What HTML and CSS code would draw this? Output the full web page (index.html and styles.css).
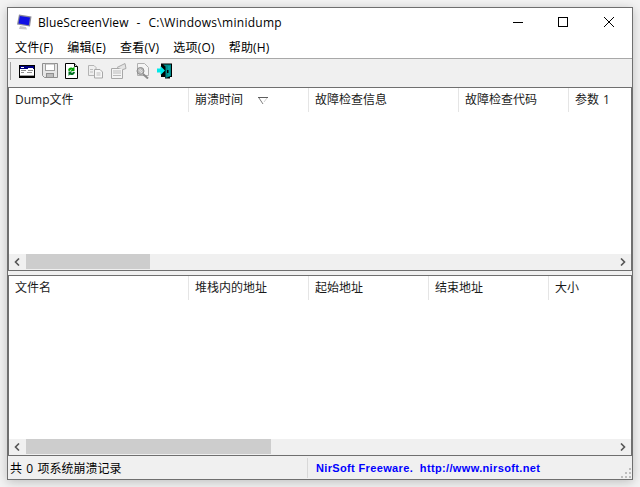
FILE: index.html
```html
<!DOCTYPE html>
<html lang="zh-CN">
<head>
    <meta charset="UTF-8">
    <meta name="viewport" content="width=device-width, initial-scale=1.0">
    <title>BlueScreenView</title>
    <link rel="stylesheet" href="styles.css">
</head>
<body>
    <div class="window">
        <div class="titlebar">
            <svg class="app-icon" width="18" height="18" viewBox="0 0 18 18">
                <path d="M3 0.5 L15.5 2.5 L14 12.5 L1 10.5 Z" fill="#8a8a9a"/>
                <path d="M3.8 2 L14 3.5 L12.8 11.2 L2.5 9.5 Z" fill="#1010e4"/>
                <path d="M4 12 L10 13 L11 15.5 L3 15 Z" fill="#c8c8c8"/>
            </svg>
            <span class="title">BlueScreenView&nbsp; -&nbsp; <span class="title-path">C:\Windows\minidump</span></span>
            <div class="caption-buttons">
                <svg width="46" height="30" viewBox="0 0 46 30"><path d="M19 14.5 H29" stroke="#000" fill="none"/></svg>
                <svg width="46" height="30" viewBox="0 0 46 30"><rect x="18.5" y="9.5" width="9" height="9" stroke="#000" fill="none"/></svg>
                <svg width="46" height="30" viewBox="0 0 46 30"><path d="M18 9 L28 19 M28 9 L18 19" stroke="#000" fill="none"/></svg>
            </div>
        </div>

        <div class="menubar">
            <span>文件(F)</span>
            <span>编辑(E)</span>
            <span>查看(V)</span>
            <span>选项(O)</span>
            <span>帮助(H)</span>
        </div>

        <div class="toolbar">
            <div class="grip"></div>
            <!-- properties -->
            <svg width="16" height="16" viewBox="0 0 16 16">
                <rect x="0.5" y="2.5" width="15" height="12" fill="#fff" stroke="#000"/>
                <rect x="1" y="3" width="14" height="3" fill="#000080"/>
                <path d="M2 4.5 H5 M9 5.5 H14" stroke="#fff"/>
                <path d="M2 7.5 H7 M9 7.5 H14 M2 9.5 H5 M8 9.5 H13" stroke="#909090"/>
                <path d="M1 12.5 H15" stroke="#a0a0a0"/>
                <path d="M1 13.5 H15" stroke="#000"/>
            </svg>
            <!-- save, disabled -->
            <svg width="16" height="16" viewBox="0 0 16 16">
                <path d="M0.5 0.5 H15.5 V14.5 H2.5 L0.5 12.5 Z" fill="#e6e6e6" stroke="#8f8f8f"/>
                <rect x="3.5" y="1" width="9" height="6.5" fill="#fff" stroke="#a0a0a0"/>
                <rect x="4.5" y="10.5" width="7" height="4" fill="#bcbcbc" stroke="#8f8f8f"/>
            </svg>
            <!-- refresh -->
            <svg width="16" height="16" viewBox="0 0 16 16">
                <path d="M0.5 0.5 H9.5 L12.5 3.5 V15.5 H0.5 Z" fill="#fff" stroke="#000"/>
                <path d="M9.5 0.5 V3.5 H12.5" fill="#ddd" stroke="#000"/>
                <path d="M3 7.5 A3.3 3.3 0 0 1 8 5 L9.5 3.5 V8 H5.5 L7 6.5 A1.6 1.6 0 0 0 5 8 Z" fill="#00a000"/>
                <path d="M10 9 A3.3 3.3 0 0 1 5 11.5 L3.5 13 V8.5 H7.5 L6 10 A1.6 1.6 0 0 0 8 8.8 Z" fill="#007020"/>
            </svg>
            <!-- copy, disabled -->
            <svg width="16" height="16" viewBox="0 0 16 16">
                <path d="M0.5 2.5 H6 L8 4.5 V12.5 H0.5 Z" fill="#efefef" stroke="#b4b4b4"/>
                <path d="M6.5 6.5 H12 L14.5 9 V15 H6.5 Z" fill="#f6f6f6" stroke="#a8a8a8"/>
                <path d="M2 6.5 H5 M2 9 H5 M8.5 10 H12.5 M8.5 12 H12.5" stroke="#bdbdbd"/>
            </svg>
            <!-- report, disabled -->
            <svg width="16" height="16" viewBox="0 0 16 16">
                <path d="M0.5 5.5 H11.5 V15.5 H0.5 Z" fill="#f4f4f4" stroke="#a8a8a8"/>
                <path d="M2 8 H10 M2 10 H10 M2 12.5 H10" stroke="#bbb"/>
                <path d="M6 4.5 L14 0.5 L15 5.5 L12 6.5" fill="#e4e4e4" stroke="#a8a8a8"/>
            </svg>
            <!-- find, disabled -->
            <svg class="find-icon" width="16" height="16" viewBox="0 0 16 16">
                <path d="M2.5 0.5 H9.5 L13.5 4.5 V12.5 H2.5 Z" fill="#f4f4f4" stroke="#b0b0b0"/>
                <circle cx="5.5" cy="8" r="3.5" fill="#b8b8b8" stroke="#8c8c8c"/>
                <path d="M3.5 7 L7 10 M4.5 6 L7.5 8.5" stroke="#e8e8e8"/>
                <path d="M8 11 L13 15.5" stroke="#8c8c8c" stroke-width="2"/>
            </svg>
            <!-- exit -->
            <svg class="exit-icon" width="16" height="16" viewBox="0 0 16 16">
                <path d="M4 0.5 H15 V14 H13 V15.5 H8 V14 H4 Z" fill="#000"/>
                <path d="M6 1.5 H14 V13 L8.5 15 V3.5 Z" fill="#008a8a"/>
                <path d="M12 3 V13" stroke="#00b8b8"/>
                <rect x="10" y="7" width="1.5" height="3" fill="#000"/>
                <path d="M0 5.5 H3.5 V3 L8 7.5 L3.5 12 V9.5 H0 Z" fill="#00e8e8"/>
            </svg>
        </div>

        <div class="list list-top">
            <div class="list-head">
                <span>Dump文件</span>
                <span>崩溃时间<svg class="sort-mark" width="11" height="8" viewBox="0 0 11 8"><path d="M0 0.5 H10" stroke="#5e5e5e" fill="none"/><path d="M1 1 L5 7" stroke="#7e7e7e" fill="none"/><path d="M9 1 L6 5" stroke="#d0d0d0" fill="none"/></svg></span>
                <span>故障检查信息</span>
                <span>故障检查代码</span>
                <span>参数 1</span>
            </div>
            <div class="list-body"></div>
            <div class="scrollbar">
                <div class="arrow"><svg width="7" height="8" viewBox="0 0 7 8"><path d="M5 0.5 L1.5 4 L5 7.5" fill="none" stroke="#555" stroke-width="1.6"/></svg></div>
                <div class="track"><div class="thumb thumb-top"></div></div>
                <div class="arrow"><svg width="7" height="8" viewBox="0 0 7 8"><path d="M2 0.5 L5.5 4 L2 7.5" fill="none" stroke="#555" stroke-width="1.6"/></svg></div>
            </div>
        </div>

        <div class="splitter"></div>

        <div class="list list-bottom">
            <div class="list-head">
                <span>文件名</span>
                <span>堆栈内的地址</span>
                <span>起始地址</span>
                <span>结束地址</span>
                <span>大小</span>
            </div>
            <div class="list-body"></div>
            <div class="scrollbar">
                <div class="arrow"><svg width="7" height="8" viewBox="0 0 7 8"><path d="M5 0.5 L1.5 4 L5 7.5" fill="none" stroke="#555" stroke-width="1.6"/></svg></div>
                <div class="track"><div class="thumb thumb-bottom"></div></div>
                <div class="arrow"><svg width="7" height="8" viewBox="0 0 7 8"><path d="M2 0.5 L5.5 4 L2 7.5" fill="none" stroke="#555" stroke-width="1.6"/></svg></div>
            </div>
        </div>

        <div class="statusbar">
            <div class="status-count">共 0 项系统崩溃记录</div>
            <div class="status-link">NirSoft Freeware.&nbsp; http://www.nirsoft.net</div>
            <svg class="size-grip" width="11" height="11" viewBox="0 0 11 11">
                <path d="M8 0 h2 v2 h-2 Z M4 4 h2 v2 h-2 Z M8 4 h2 v2 h-2 Z M0 8 h2 v2 h-2 Z M4 8 h2 v2 h-2 Z M8 8 h2 v2 h-2 Z" fill="#bdbdbd"/>
            </svg>
        </div>
    </div>
</body>
</html>
```

FILE: styles.css
```css
html, body {
    height: 100%;
}

body {
    margin: 0;
    padding: 7px;
    box-sizing: border-box;
    width: 640px;
    height: 487px;
    overflow: hidden;
    background-color: #f3f3f3;
    font-family: "Open Sans", "Noto Sans CJK SC", sans-serif;
    font-size: 12px;
    color: #000;
}

.window {
    width: 626px;
    height: 473px;
    box-sizing: border-box;
    border: 1px solid #6f6f6f;
    background-color: #fff;
    box-shadow: 0 2px 10px rgba(0, 0, 0, 0.22);
    display: flex;
    flex-direction: column;
}

.titlebar {
    height: 30px;
    flex: none;
    display: flex;
    align-items: center;
    padding-left: 8px;
}

.app-icon {
    margin-right: 4px;
}

.title {
    flex: 1;
    padding-bottom: 2px;
    letter-spacing: 0.1px;
    word-spacing: 0.75px;
}

.title-path {
    letter-spacing: 0.28px;
}

.caption-buttons {
    display: flex;
}

.menubar {
    flex: none;
    display: flex;
    gap: 14px;
    align-items: center;
    padding: 0 0 2px 7px;
    height: 18px;
    letter-spacing: 0.2px;
    border-bottom: 1px solid #a8a8a8;
}

.toolbar {
    height: 24px;
    flex: none;
    display: flex;
    align-items: center;
    gap: 7px;
    padding: 0 0 4px 2px;
    background-color: #f0f0f0;
}

.grip {
    width: 1px;
    height: 18px;
    background-color: #a0a0a0;
    margin-right: 1px;
}

.find-icon {
    margin-left: 1px;
    margin-right: -1px;
}

.list {
    display: flex;
    flex-direction: column;
    flex: none;
    border: 1px solid #6f6f6f;
    overflow: hidden;
}

.list-top {
    height: 182px;
}

.list-bottom {
    height: 179px;
}

.list-head {
    height: 24px;
    flex: none;
    display: grid;
    color: #1a1a1a;
}

.list-top .list-head {
    grid-template-columns: 180px 120px 150px 110px 1fr;
}

.list-bottom .list-head {
    grid-template-columns: 180px 120px 120px 120px 1fr;
}

.list-head span {
    display: flex;
    align-items: center;
    padding: 0 0 2px 6px;
    border-right: 1px solid #e5e5e5;
    white-space: nowrap;
    word-spacing: 1px;
}

.list-head span:last-child {
    border-right: none;
}

.sort-mark {
    margin-left: 15px;
    margin-top: 4px;
}

.list-body {
    flex: 1;
}

.scrollbar {
    height: 15px;
    flex: none;
    display: flex;
    padding-bottom: 1px;
    background-color: #f0f0f0;
}

.arrow {
    width: 17px;
    flex: none;
    display: flex;
    align-items: center;
    justify-content: center;
}

.track {
    flex: 1;
}

.thumb {
    height: 100%;
    background-color: #cdcdcd;
}

.thumb-top {
    width: 124px;
}

.thumb-bottom {
    width: 245px;
}

.splitter {
    height: 4px;
    flex: none;
    background-color: #f0f0f0;
}

.statusbar {
    flex: 1;
    position: relative;
    display: flex;
    align-items: center;
    background-color: #f0f0f0;
}

.status-count {
    width: 300px;
    height: 20px;
    box-sizing: border-box;
    padding-left: 2px;
    display: flex;
    align-items: center;
    border-right: 1px solid #d8d8d8;
    word-spacing: 1.2px;
}

.status-link {
    padding-left: 8px;
    font-family: "Liberation Sans", sans-serif;
    font-weight: bold;
    font-size: 11px;
    letter-spacing: 0.35px;
    color: #0000ff;
}

/* lies over the corner of the status bar */
.size-grip {
    position: absolute;
    right: 0;
    bottom: 0;
}
```
